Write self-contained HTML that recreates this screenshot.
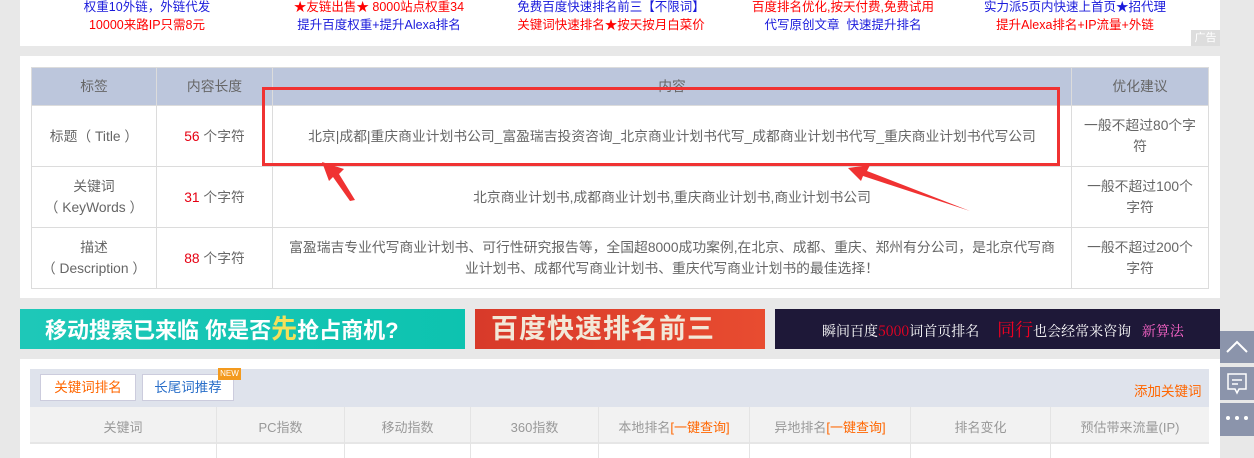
<!DOCTYPE html>
<html><head><meta charset="utf-8"><style>
*{margin:0;padding:0;box-sizing:border-box}
html,body{width:1254px;height:458px;overflow:hidden}
body{background:#e8e8e8;position:relative;font-family:"Liberation Sans","Noto Sans CJK SC",sans-serif;font-size:13px;color:#666}
.abs{position:absolute}
.top{left:20px;top:0;width:1200px;height:46px;background:#fff}
.ad{position:absolute;width:232px;text-align:center;font-size:12.5px;line-height:18px}
.b{color:#1a1adb}.r{color:#f00}
table{border-collapse:collapse}
.t1{left:31px;top:67px;width:1178px}
.t1 td,.t1 th{border:1px solid #dcdcdc;text-align:center;font-weight:normal;font-size:13.8px;color:#666;line-height:21px}
.t1 th{background:#bcc6dc;height:38px;color:#666}
.num{color:#e60012}
</style></head><body>
<div class="abs top">
 <div class="ad" style="left:11px;top:-2px"><span class="b">权重10外链，外链代发</span><br><span class="r">10000来路IP只需8元</span></div>
 <div class="ad" style="left:243px;top:-2px"><span class="r">★友链出售★ 8000站点权重34</span><br><span class="b">提升百度权重+提升Alexa排名</span></div>
 <div class="ad" style="left:475px;top:-2px"><span class="b">免费百度快速排名前三【不限词】</span><br><span class="r">关键词快速排名★按天按月白菜价</span></div>
 <div class="ad" style="left:707px;top:-2px"><span class="r">百度排名优化,按天付费,免费试用</span><br><span class="b">代写原创文章&nbsp; 快速提升排名</span></div>
 <div class="ad" style="left:939px;top:-2px"><span class="b">实力派5页内快速上首页★招代理</span><br><span class="r">提升Alexa排名+IP流量+外链</span></div>
 <div class="abs" style="left:1171px;top:30px;width:29px;height:16px;background:#ddd;color:#fff;font-size:11px;text-align:center;line-height:16px">广告</div>
</div>
<div class="abs" style="left:20px;top:56px;width:1200px;height:242px;background:#fff"></div>
<table class="abs t1">
<tr><th style="width:125px">标签</th><th style="width:116px">内容长度</th><th style="width:799px">内容</th><th>优化建议</th></tr>
<tr style="height:61px"><td>标题（ Title ）</td><td><span class="num">56</span> 个字符</td><td>北京|成都|重庆商业计划书公司_富盈瑞吉投资咨询_北京商业计划书代写_成都商业计划书代写_重庆商业计划书代写公司</td><td>一般不超过80个字<br>符</td></tr>
<tr style="height:61px"><td>关键词<br>（ KeyWords ）</td><td><span class="num">31</span> 个字符</td><td>北京商业计划书,成都商业计划书,重庆商业计划书,商业计划书公司</td><td>一般不超过100个<br>字符</td></tr>
<tr style="height:61px"><td>描述<br>（ Description ）</td><td><span class="num">88</span> 个字符</td><td>富盈瑞吉专业代写商业计划书、可行性研究报告等，全国超8000成功案例,在北京、成都、重庆、郑州有分公司，是北京代写商<br>业计划书、成都代写商业计划书、重庆代写商业计划书的最佳选择！</td><td>一般不超过200个<br>字符</td></tr>
</table>
<div class="abs" style="left:262px;top:87px;width:798px;height:79px;border:3px solid #f03232"></div>
<svg class="abs" style="left:0;top:0" width="1254" height="458">
<polygon points="322,162 344,169 339,174 355,200 350,201 333,177 329,181" fill="#f03232"/>
<polygon points="848,168 870,165 867,171 970,211 863,176 861,181" fill="#f03232"/>
</svg>
<div class="abs" style="left:20px;top:309px;width:445px;height:40px;background:linear-gradient(90deg,#1ec8b8,#0dc3b0);color:#fff;font-size:22px;font-weight:bold;line-height:40px;padding-left:25px">移动搜索已来临 你是否<span style="color:#f5e05a;font-size:26px">先</span>抢占商机?</div>
<div class="abs" style="left:475px;top:309px;width:290px;height:40px;background:linear-gradient(90deg,#d83a2a,#e84c30);color:#f2e8d8;font-size:27px;font-weight:bold;line-height:40px;padding-left:16px;letter-spacing:1px">百度快速排名前三</div>
<div class="abs" style="left:775px;top:309px;width:445px;height:40px;background:#1e1838;color:#fff;font-size:14px;line-height:40px;padding-left:47px;font-family:'Noto Serif CJK SC',serif">瞬间百度<span style="color:#e02">5000</span>词首页排名 &nbsp;&nbsp;&nbsp; <span style="color:#e02;font-size:18px">同行</span>也会经常来咨询 &nbsp; <span style="color:#f6c">新算法</span></div>
<div class="abs" style="left:20px;top:359px;width:1200px;height:99px;background:#fff"></div>
<div class="abs" style="left:30px;top:369px;width:1179px;height:38px;background:#dfe3ec"></div>
<div class="abs" style="left:40px;top:374px;width:96px;height:27px;background:#fff;border:1px solid #ccd;color:#f60;text-align:center;line-height:25px;font-size:13.5px">关键词排名</div>
<div class="abs" style="left:142px;top:374px;width:92px;height:27px;background:#fff;border:1px solid #ccd;color:#2a6fc9;text-align:center;line-height:25px;font-size:13.5px">长尾词推荐</div>
<div class="abs" style="left:218px;top:368px;width:23px;height:12px;background:#f39a1e;color:#fff;font-size:8px;line-height:12px;text-align:center">NEW</div>
<div class="abs" style="left:1134px;top:380px;color:#f60;font-size:13.5px">添加关键词</div>
<div class="abs" style="left:30px;top:407px;width:1179px;height:37px;background:#f2f2f2;border-bottom:2px solid #e6e6e6"></div>
<div class="abs" style="left:30px;top:407px;width:1179px;height:51px;font-size:13px;color:#999">
<div class="abs" style="left:0;width:186px;text-align:center;top:10px">关键词</div>
<div class="abs" style="left:186px;width:128px;text-align:center;top:0;padding-top:10px;border-left:1px solid #e4e4e4;height:51px">PC指数</div>
<div class="abs" style="left:314px;width:126px;text-align:center;top:0;padding-top:10px;border-left:1px solid #e4e4e4;height:51px">移动指数</div>
<div class="abs" style="left:440px;width:128px;text-align:center;top:0;padding-top:10px;border-left:1px solid #e4e4e4;height:51px">360指数</div>
<div class="abs" style="left:568px;width:151px;text-align:center;top:0;padding-top:10px;border-left:1px solid #e4e4e4;height:51px">本地排名<span style="color:#f60">[一键查询]</span></div>
<div class="abs" style="left:719px;width:161px;text-align:center;top:0;padding-top:10px;border-left:1px solid #e4e4e4;height:51px">异地排名<span style="color:#f60">[一键查询]</span></div>
<div class="abs" style="left:880px;width:140px;text-align:center;top:0;padding-top:10px;border-left:1px solid #e4e4e4;height:51px">排名变化</div>
<div class="abs" style="left:1020px;width:159px;text-align:center;top:0;padding-top:10px;border-left:1px solid #e4e4e4;height:51px">预估带来流量(IP)</div>
</div>
<div class="abs" style="left:1220px;top:331px;width:34px;height:32px;background:#8b94ab"><svg width="34" height="32"><polyline points="7,21 17,11 27,21" fill="none" stroke="#fff" stroke-width="2"/></svg></div>
<div class="abs" style="left:1220px;top:367px;width:34px;height:33px;background:#8b94ab"><svg width="34" height="33"><path d="M8,7 H26 V22 H19 L17,26 L15,22 H8 Z" fill="none" stroke="#fff" stroke-width="1.5"/><line x1="12" y1="13" x2="22" y2="13" stroke="#fff" stroke-width="1.5"/><line x1="12" y1="17" x2="18" y2="17" stroke="#fff" stroke-width="1.5"/></svg></div>
<div class="abs" style="left:1220px;top:403px;width:34px;height:33px;background:#8b94ab"><svg width="34" height="33"><circle cx="8" cy="15" r="2" fill="#fff"/><circle cx="17" cy="15" r="2" fill="#fff"/><circle cx="26" cy="15" r="2" fill="#fff"/></svg></div>
</body></html>
